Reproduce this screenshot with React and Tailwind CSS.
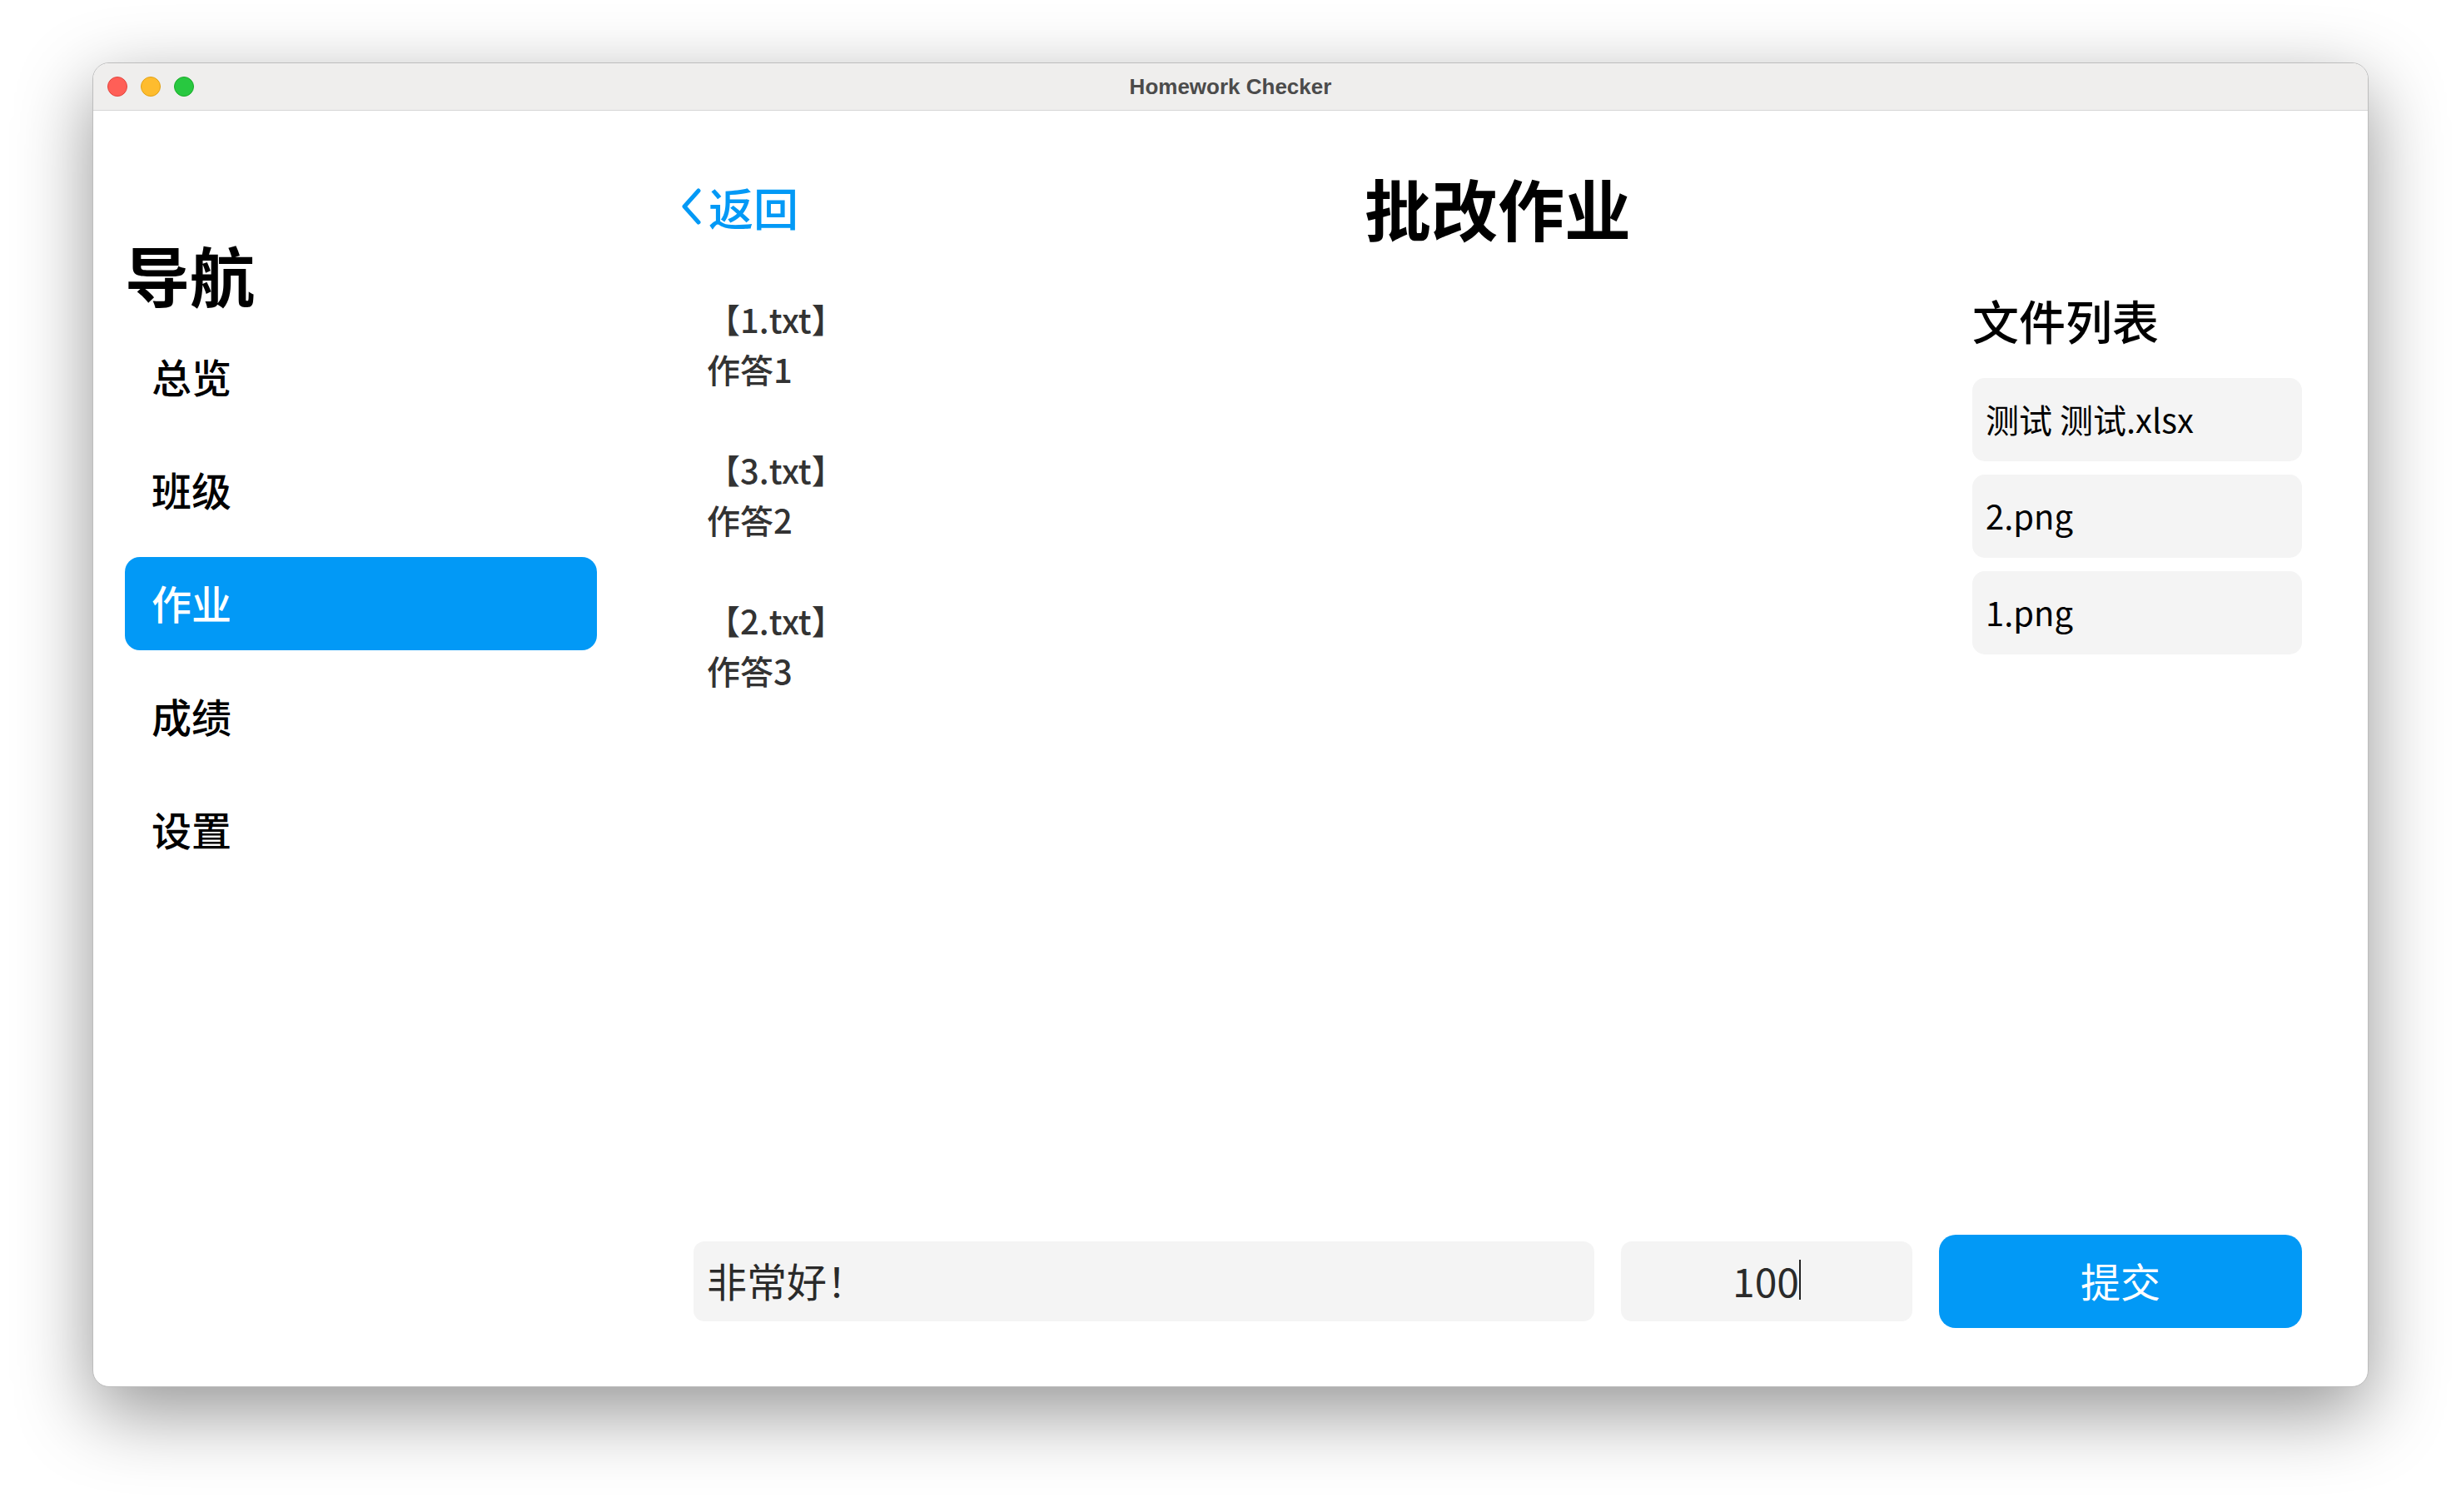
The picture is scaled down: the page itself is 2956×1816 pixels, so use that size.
import { useState } from "react";

const navItems = ["总览", "班级", "作业", "成绩", "设置"];

const answers = [
  { file: "1.txt", text: "作答1" },
  { file: "3.txt", text: "作答2" },
  { file: "2.txt", text: "作答3" },
];

const files = ["测试 测试.xlsx", "2.png", "1.png"];

const TitleBar = () => (
  <div className="h-[57px] shrink-0 bg-[#efeeed] border-b border-[#d6d6d6] grid grid-cols-[1fr_auto_1fr] items-center">
    <div className="flex items-center gap-[16px] pl-[17px]">
      <span className="w-[24px] h-[24px] rounded-full bg-[#ff5f57] border border-[#e2463f]" />
      <span className="w-[24px] h-[24px] rounded-full bg-[#febc2e] border border-[#e1a116]" />
      <span className="w-[24px] h-[24px] rounded-full bg-[#28c840] border border-[#1aab29]" />
    </div>
    <div className="font-['Liberation_Sans',sans-serif] font-bold text-[26px] text-[#4b4b4b]">
      Homework Checker
    </div>
    <div />
  </div>
);

const Sidebar = ({ active, onSelect }) => (
  <div className="w-[643px] shrink-0 px-[38px] pt-[140px]">
    <h1 className="text-[78px] leading-[113px] font-bold text-black">导航</h1>
    <div className="mt-[11px] flex flex-col gap-[24px]">
      {navItems.map((item) => (
        <button
          key={item}
          onClick={() => onSelect(item)}
          className={
            item === active
              ? "h-[112px] rounded-[18px] px-[32px] pb-[5px] flex items-center text-[48px] font-medium bg-[#0299f6] text-white"
              : "h-[112px] rounded-[18px] px-[32px] pb-[5px] flex items-center text-[48px] font-medium text-black"
          }
        >
          {item}
        </button>
      ))}
    </div>
  </div>
);

export default function App() {
  const [active, setActive] = useState("作业");

  return (
    <div className="min-h-screen bg-white pt-[75px] pl-[111px] font-['Noto_Sans_CJK_SC','Noto_Sans',sans-serif]">
      <div className="w-[2734px] h-[1591px] rounded-[20px] overflow-hidden bg-white border border-[#bdbdbd] shadow-[0_30px_90px_rgba(0,0,0,0.42)] flex flex-col">
        <TitleBar />
        <div className="flex-1 flex">
          <Sidebar active={active} onSelect={setActive} />

          <div className="flex-1 flex flex-col pl-[78px] pr-[81px] pt-[57px] pb-[70px]">
            {/* header */}
            <div className="h-[116px] grid grid-cols-[1fr_auto_1fr] items-center">
              <button className="-ml-[15px] flex items-center gap-[8px] text-[54px] font-medium text-[#0299f6] justify-self-start">
                <svg width="25" height="44" viewBox="0 0 25 44" fill="none">
                  <polyline points="21,3 4,22 21,41" stroke="#0299f6" strokeWidth="5" strokeLinecap="round" strokeLinejoin="round" />
                </svg>
                <span>返回</span>
              </button>
              <h2 className="text-[80px] leading-[116px] font-bold text-black">批改作业</h2>
              <div />
            </div>

            {/* body */}
            <div className="flex-1 flex mt-[37px]">
              <div className="flex-1 pt-[10px] pl-[16px] flex flex-col gap-[61px]">
                {answers.map((a) => (
                  <div key={a.file} className="text-[40px] leading-[60px] font-medium text-[#333]">
                    <div>【{a.file}】</div>
                    <div>{a.text}</div>
                  </div>
                ))}
              </div>
              <div className="w-[396px] shrink-0">
                <h3 className="text-[56px] leading-[81px] font-medium text-black">文件列表</h3>
                <div className="mt-[30px] flex flex-col gap-[16px]">
                  {files.map((f) => (
                    <div key={f} className="h-[100px] rounded-[15px] bg-[#f4f4f4] px-[16px] pb-[2px] flex items-center text-[40px] text-black">
                      {f}
                    </div>
                  ))}
                </div>
              </div>
            </div>

            {/* footer */}
            <div className="h-[112px] flex items-center gap-[32px]">
              <div className="w-[1082px] h-[96px] rounded-[13px] bg-[#f4f4f4] px-[16px] pb-[4px] flex items-center text-[48px] text-[#2a2a2a]">
                非常好！
              </div>
              <div className="w-[350px] h-[96px] rounded-[13px] bg-[#f4f4f4] pb-[4px] flex items-center justify-center text-[48px] text-[#2a2a2a]">
                <span>100</span>
                <span className="w-[2px] h-[48px] bg-[#222]" />
              </div>
              <button className="w-[436px] h-[112px] rounded-[20px] bg-[#0299f6] pb-[4px] text-white text-[48px] flex items-center justify-center">
                提交
              </button>
            </div>
          </div>
        </div>
      </div>
    </div>
  );
}
